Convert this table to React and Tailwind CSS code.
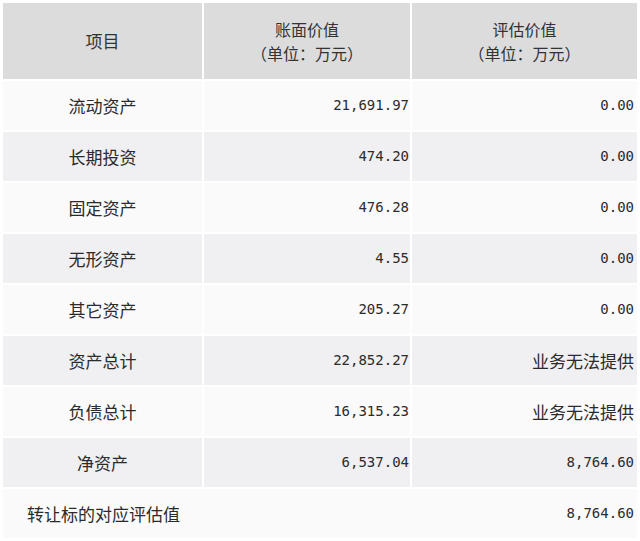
const ROWS = [
  ["流动资产", "21,691.97", "0.00"],
  ["长期投资", "474.20", "0.00"],
  ["固定资产", "476.28", "0.00"],
  ["无形资产", "4.55", "0.00"],
  ["其它资产", "205.27", "0.00"],
  ["资产总计", "22,852.27", "业务无法提供"],
  ["负债总计", "16,315.23", "业务无法提供"],
  ["净资产", "6,537.04", "8,764.60"],
];

const CJK = "font-['Noto_Sans_CJK_SC',sans-serif]";
const NUM = "font-['DejaVu_Sans_Mono','Noto_Sans_CJK_SC',monospace] text-[14px]";

function Value({ v }) {
  const isNum = /^[\d,.]+$/.test(v);
  return <span className={isNum ? NUM : `${CJK} text-[17px]`}>{v}</span>;
}

export default function App() {
  return (
    <div className={`w-[640px] h-[541px] bg-white p-[3px] text-[#2b2b2b] ${CJK} text-[17px]`}>
      <div className="grid grid-cols-[199px_206px_225px] gap-[2px]">
        <div className="h-[76px] bg-[#dcdcdc] flex items-center justify-center text-[#333]">项目</div>
        <div className="h-[76px] bg-[#dcdcdc] flex flex-col items-center justify-center text-[16px] leading-[24px] text-[#333]">
          <span>账面价值</span>
          <span>（单位：万元）</span>
        </div>
        <div className="h-[76px] bg-[#dcdcdc] flex flex-col items-center justify-center text-[16px] leading-[24px] text-[#333]">
          <span>评估价值</span>
          <span>（单位：万元）</span>
        </div>

        {ROWS.map(([label, book, est], i) => {
          const bg = i % 2 === 0 ? "bg-[#fbfafb]" : "bg-[#f0eff1]";
          return [
            <div key={`a${i}`} className={`h-[49px] ${bg} flex items-center justify-center`}>{label}</div>,
            <div key={`b${i}`} className={`h-[49px] ${bg} flex items-center justify-end pr-[1px]`}>
              <Value v={book} />
            </div>,
            <div key={`c${i}`} className={`h-[49px] ${bg} flex items-center justify-end pr-[3px]`}>
              <Value v={est} />
            </div>,
          ];
        })}

        <div className="col-span-3 h-[49px] bg-[#fbfafb] flex items-center justify-between pl-[24px] pr-[3px]">
          <span>转让标的对应评估值</span>
          <Value v="8,764.60" />
        </div>
      </div>
    </div>
  );
}
